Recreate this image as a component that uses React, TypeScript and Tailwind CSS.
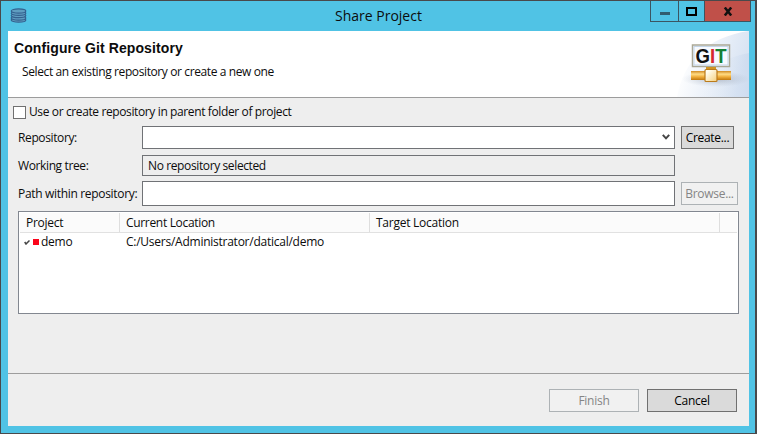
import type { ReactNode } from "react";

function DatabaseIcon() {
  return (
    <svg className="ml-[9px] mt-[7px] h-[15px] w-[17px]" viewBox="0 0 17 15">
      <g fill="#5f9dc0" stroke="#34618f" strokeWidth="1.200">
        <ellipse cx="8.500" cy="12" rx="7.300" ry="2.100" />
        <ellipse cx="8.500" cy="10" rx="7.300" ry="2.100" />
        <ellipse cx="8.500" cy="7.600" rx="7.300" ry="2.100" />
        <ellipse cx="8.500" cy="5.300" rx="7.300" ry="2.100" />
        <ellipse cx="8.500" cy="3" rx="7.300" ry="2.100" />
      </g>
    </svg>
  );
}

function GitBanner() {
  return (
    <svg className="h-[66px] w-[79px]" viewBox="0 0 79 66">
      <defs>
        <linearGradient id="sky" x1="0" y1="0" x2="1" y2="0.250">
          <stop offset="0.150" stopColor="#fff" />
          <stop offset="1" stopColor="#d9e4f3" />
        </linearGradient>
        <linearGradient id="haze" x1="0" y1="0" x2="1" y2="0">
          <stop offset="0.100" stopColor="#fff" stopOpacity="0" />
          <stop offset="1" stopColor="#b9cde8" stopOpacity="0.350" />
        </linearGradient>
        <linearGradient id="pipe" x1="0" y1="0" x2="0" y2="1">
          <stop offset="0" stopColor="#d08a22" />
          <stop offset="0.350" stopColor="#ffdc85" />
          <stop offset="0.650" stopColor="#f0ad3a" />
          <stop offset="1" stopColor="#bf7810" />
        </linearGradient>
        <linearGradient id="hub" x1="0" y1="0" x2="1" y2="1">
          <stop offset="0.200" stopColor="#fffdf0" />
          <stop offset="1" stopColor="#f5cf7c" />
        </linearGradient>
        <radialGradient id="shade">
          <stop offset="0" stopColor="#8b95a5" stopOpacity="0.550" />
          <stop offset="1" stopColor="#a5b0c0" stopOpacity="0" />
        </radialGradient>
      </defs>
      <path d="M7 66C13 32 36 6 79 0V66Z" fill="url(#sky)" />
      <path d="M20 66C33 40 52 27 79 22V66Z" fill="url(#haze)" />
      <ellipse cx="46" cy="48" rx="34" ry="8" fill="url(#shade)" />
      <rect x="22.500" y="14" width="37" height="21.500" fill="#f7faff" stroke="#aaa896" strokeWidth="1.500" />
      <rect x="24" y="15.500" width="34" height="18.500" fill="none" stroke="#c4d5e8" />
      <text x="25.500" y="32" fontFamily="Liberation Sans, sans-serif" fontSize="20.500" fontWeight="700" textLength="31" lengthAdjust="spacingAndGlyphs">
        <tspan fill="#111">G</tspan><tspan fill="#d52732">I</tspan><tspan fill="#148034">T</tspan>
      </text>
      <rect x="36" y="36" width="10" height="3" fill="#d19424" />
      <rect x="21" y="40" width="40" height="9" fill="url(#pipe)" />
      <rect x="35" y="38.500" width="12" height="12" rx="1" fill="url(#hub)" stroke="#bb7b1b" strokeWidth="1.200" />
    </svg>
  );
}

function Label({ children }: { children: ReactNode }) {
  return <span className="w-[124px] shrink-0 whitespace-nowrap leading-4">{children}</span>;
}

export default function App() {
  return (
    <div className="flex h-[434px] w-[757px] flex-col overflow-hidden border-y border-r-2 border-l border-[#49494b] bg-[#50c3e5] pr-[5px] pl-[7px] font-['Open_Sans','Noto_Sans',sans-serif] text-[12px] leading-4 text-[#0c0c0c]">
      <header className="-mr-[5px] -ml-[7px] flex h-[30px] shrink-0">
        <div className="w-[334px]"><DatabaseIcon /></div>
        <h1 className="mt-[5px] w-[315px] whitespace-nowrap text-[14px] leading-5">Share Project</h1>
        <div className="flex h-[21px] w-[101px] border-x border-b border-[#3b5562]">
          <button className="w-[28px] border-r border-[#3b5562]"><span className="mx-auto mt-[4px] block h-[3px] w-[10px] bg-[#315e70]" /></button>
          <button className="w-[26px] border-r border-[#3b5562]"><span className="mx-auto block h-[9px] w-[11px] border-2 border-black" /></button>
          <button className="flex flex-1 items-center justify-center bg-[#c05049]">
            <svg className="h-[9px] w-[10px]" viewBox="0 0 10 9"><path d="M1.800 0.500 8.200 8.500M8.200 0.500 1.800 8.500" stroke="#111" strokeWidth="2.500" /></svg>
          </button>
        </div>
      </header>
      <main className="flex h-[395px] w-[741px] shrink-0 flex-col bg-[#eee]">
        <section className="flex h-[67px] shrink-0 justify-between border-b border-[#9c9c9c] bg-white">
          <div className="whitespace-nowrap">
            <h2 className="mt-[9px] ml-[6px] font-['Liberation_Sans',sans-serif] text-[14px] leading-4 font-bold tracking-[0.1px]">Configure Git Repository</h2>
            <p className="mt-[8px] ml-[14px] tracking-[-0.39px]">Select an existing repository or create a new one</p>
          </div>
          <GitBanner />
        </section>
        <label className="mt-[7px] ml-[5px] flex h-[14px] shrink-0 items-center">
          <span className="h-[13px] w-[13px] border border-[#707070] bg-white" />
          <span className="ml-[3px] whitespace-nowrap tracking-[-0.38px]">Use or create repository in parent folder of project</span>
        </label>
        <div className="mt-[6px] ml-[10px] flex h-[24px] shrink-0 items-center tracking-[-0.38px]">
          <span className="w-[124px] shrink-0 pt-[2px] leading-4">Repository:</span>
          <div className="flex h-[23px] w-[533px] items-center justify-end border border-[#707276] bg-white pr-1">
            <svg className="h-[6px] w-2" viewBox="0 0 8 6"><path d="M0.800 0.800 4 4.300 7.200 0.800" fill="none" stroke="#454545" strokeWidth="2" /></svg>
          </div>
          <button className="mt-px ml-[6px] h-[23px] w-[53px] border border-[#707070] bg-[#dadada] tracking-[-0.3px] text-black">Create...</button>
        </div>
        <div className="mt-[6px] ml-[10px] flex h-[21px] shrink-0 items-center tracking-[-0.38px]">
          <Label>Working tree:</Label>
          <div className="flex h-[21px] w-[533px] items-center border border-[#707276] pl-[5px]">No repository selected</div>
        </div>
        <div className="mt-[5px] ml-[10px] flex h-[25px] shrink-0 items-center tracking-[-0.32px]">
          <Label>Path within repository:</Label>
          <div className="h-[25px] w-[533px] border border-[#707276] bg-white" />
          <button className="ml-[6px] h-[23px] w-[57px] border border-[#adb2b5] bg-[#f1f1f1] tracking-[-0.3px] text-[#858585]">Browse...</button>
        </div>
        <div className="mt-[5px] ml-[10px] h-[103px] w-[721px] shrink-0 border border-[#828790] bg-white p-px tracking-[-0.25px]">
          <div className="flex h-[20px] border-b border-[#e1e1e1] bg-[#fbfbfb]">
            <div className="flex w-[100px] items-center border-r border-[#dedede] pl-[6px]">Project</div>
            <div className="flex w-[250px] items-center border-r border-[#dedede] pl-[6px] tracking-[-0.32px]">Current Location</div>
            <div className="flex w-[350px] items-center border-r border-[#dedede] pl-[6px]">Target Location</div>
          </div>
          <div className="flex h-[18px] items-center">
            <div className="flex w-[106px] items-center pl-[4px]">
              <svg className="h-[5px] w-[6px]" viewBox="0 0 6 5"><path d="M0.700 2 2 4 5.500 0.500" fill="none" stroke="#444" strokeWidth="1.500" /></svg>
              <span className="ml-[3px] h-[6px] w-[6px] bg-[#fb051b]" /><span className="ml-[2px]">demo</span>
            </div>
            <span>C:/Users/Administrator/datical/demo</span>
          </div>
        </div>
        <footer className="mt-[59px] flex h-[53px] shrink-0 justify-end gap-2 border-t border-[#9d9d9d] pt-[15px] pr-3 tracking-[-0.25px]">
          <button className="h-[23px] w-[90px] border border-[#adb2b5] bg-[#f1f1f1] text-[#858585]">Finish</button>
          <button className="h-[23px] w-[90px] border border-[#707070] bg-[#dadada] text-black">Cancel</button>
        </footer>
      </main>
    </div>
  );
}
